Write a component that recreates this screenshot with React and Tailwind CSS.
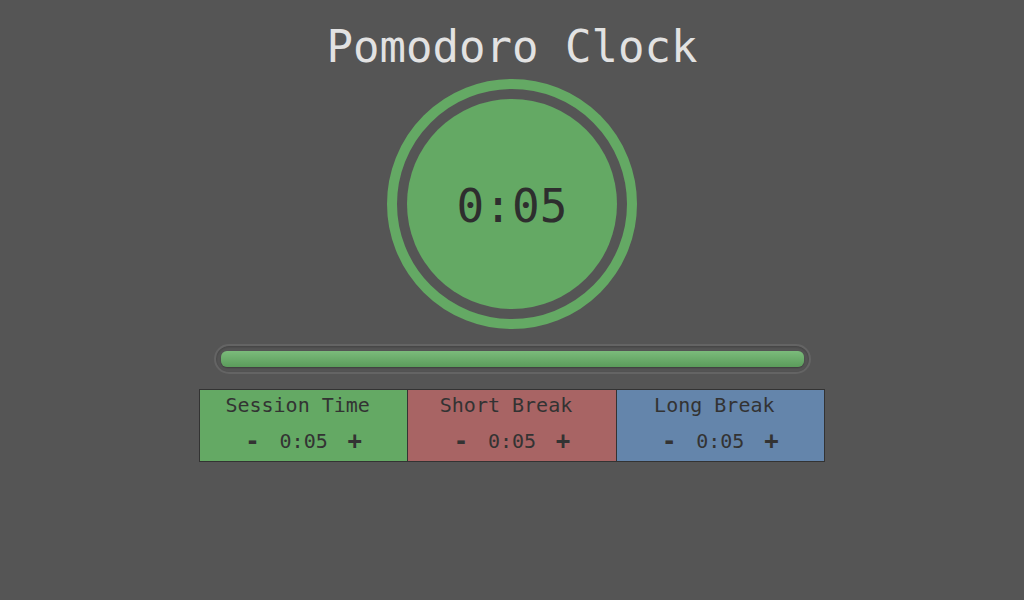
import React from 'react';

const mono = { fontFamily: '"DejaVu Sans Mono", "Liberation Mono", monospace' };

const Setting = ({ label, value, color, last }) => {
    return (
        <div className={`flex-1 flex flex-col items-center border border-[#333] ${color} ${last ? '' : 'border-r-0'} h-[73px]`}>
            <div className="pt-[3px] pr-[12px] leading-[24px] text-[20px] text-[#333]">{label}</div>
            <div className="mt-[12px] flex items-center gap-[15px] text-[#333]">
                <button className="w-[24px] leading-[24px] text-[24px] font-bold">-</button>
                <span className="leading-[24px] text-[20px]">{value}</span>
                <button className="w-[24px] leading-[24px] text-[24px] font-bold">+</button>
            </div>
        </div>
    )
}

const App = () => {

    return (
        <div className="w-[1024px] h-[600px] bg-[#555555] flex flex-col items-center pt-[20px]" style={mono}>
            <h1 className="text-[44px] leading-[53px] text-[#e2e2e2]">Pomodoro Clock</h1>

            <div className="mt-[6px] w-[250px] h-[250px] rounded-full border-[10px] border-[#64a964] flex items-center justify-center">
                <div className="w-[210px] h-[210px] rounded-full bg-[#64a964] flex items-center justify-center pt-[4px]">
                    <span className="text-[46px] text-[#2e2e2e] leading-none">0:05</span>
                </div>
            </div>

            <div className="mt-[15px] w-[597px] h-[30px] rounded-full border-2 border-[#646464] p-[5px] shadow-[inset_0_1px_3px_rgba(0,0,0,0.25)]">
                <div className="h-full w-full rounded-[6px] bg-gradient-to-b from-[#7bbb7b] to-[#5b9c5b] shadow-[0_1px_2px_rgba(0,0,0,0.3)]"></div>
            </div>

            <div className="mt-[15px] w-[626px] flex">
                <Setting label="Session Time" value="0:05" color="bg-[#64a964]" />
                <Setting label="Short Break" value="0:05" color="bg-[#a86464]" />
                <Setting label="Long Break" value="0:05" color="bg-[#6485ab]" last />
            </div>
        </div>
    )
}

export default App;
